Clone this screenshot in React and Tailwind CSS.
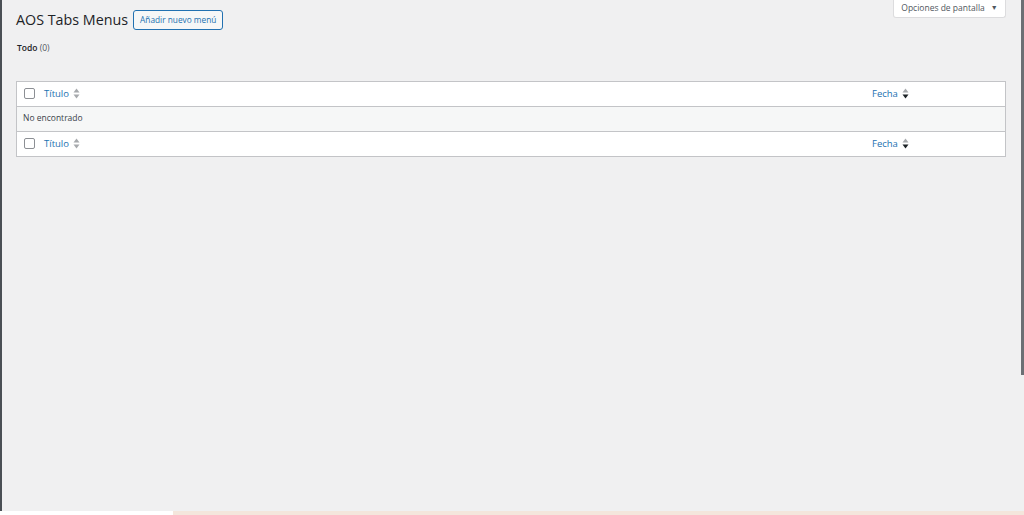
import React from 'react';

function SortIcon({ active }) {
  return (
    <svg width="7" height="11" viewBox="0 0 7 11" className="ml-[4px] inline-block">
      <path d="M3.5 0.5 L6.5 4.5 L0.5 4.5 Z" fill="#a7aaad" />
      <path d="M3.5 10.5 L6.5 6.5 L0.5 6.5 Z" fill={active ? '#1d2327' : '#a7aaad'} />
    </svg>
  );
}

function Checkbox() {
  return <span className="block h-[11px] w-[11px] rounded-[2px] border border-[#8c8f94] bg-white" />;
}

function HeadRow({ border }) {
  return (
    <div className={`flex h-[25px] items-center bg-white pl-[7px] ${border}`}>
      <Checkbox />
      <div className="ml-[9px] flex flex-1 items-center">
        <span className="text-[#2271b1]">Título</span>
        <SortIcon />
      </div>
      <div className="flex w-[133px] items-center">
        <span className="text-[#2271b1]">Fecha</span>
        <SortIcon active />
      </div>
    </div>
  );
}

export default function App() {
  return (
    <div
      className="flex h-[515px] w-[1024px] flex-col overflow-hidden bg-[#f0f0f1] text-[9.5px] text-[#3c434a]"
      style={{ fontFamily: '"Open Sans", "Noto Sans", sans-serif' }}
    >
      <div className="flex flex-1">
        <div className="w-[2px] bg-[#4a4f55]" />
        <div className="flex-1 pl-[14px] pr-[15px]">
          <div className="flex items-start justify-between">
            <div className="flex items-center pt-[10px]">
              <h1 className="text-[14.3px] leading-[20px] text-[#1d2327]">AOS Tabs Menus</h1>
              <button className="ml-[5px] h-[20px] rounded-[3px] border border-[#2271b1] bg-[#f6f7f7] px-[6px] text-[8.3px] leading-[18px] text-[#2271b1]">
                Añadir nuevo menú
              </button>
            </div>
            <button className="flex h-[18px] w-[113px] items-center justify-center gap-[6px] rounded-b-[3px] border border-t-0 border-[#dcdcde] bg-white text-[8.5px] text-[#50575e]">
              Opciones de pantalla
              <span className="text-[7px]">▼</span>
            </button>
          </div>
          <div className="mt-[12px] pl-[1px] text-[8.5px]">
            <span className="font-semibold text-[#1d2327]">Todo</span>{' '}
            <span className="text-[#50575e]">(0)</span>
          </div>
          <div className="mt-[26px] border border-[#c3c4c7]">
            <HeadRow border="border-b border-[#c3c4c7]" />
            <div className="flex h-[24px] items-center bg-[#f6f7f7] pl-[6px] text-[8.5px] text-[#3c434a]">
              No encontrado
            </div>
            <HeadRow border="border-t border-[#c3c4c7]" />
          </div>
        </div>
        <div className="flex w-[3px] flex-col">
          <div className="h-[375px] bg-[#6b6f74]" />
        </div>
      </div>
      <div className="flex h-[4px]">
        <div className="w-[173px] bg-white" />
        <div className="flex-1 bg-[#f4e6dc]" />
      </div>
    </div>
  );
}
